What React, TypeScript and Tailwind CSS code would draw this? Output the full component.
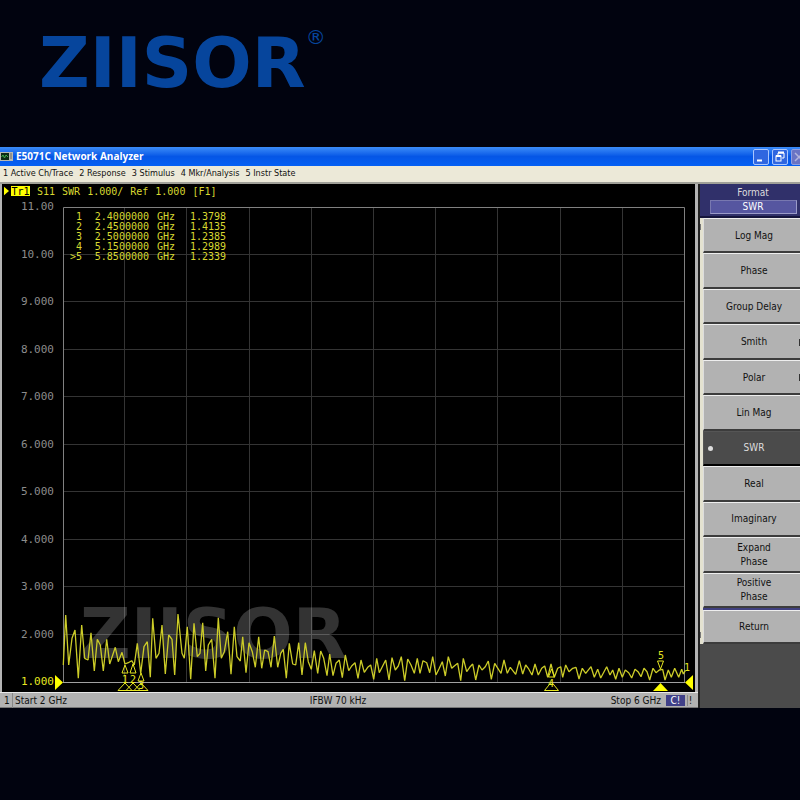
import React from "react";
import clsx from "clsx";

interface Marker {
  id: string;
  freq: string;
  value: string;
}

interface SoftKey {
  label: string;
  active?: boolean;
  submenu?: boolean;
}

const MENU = ["1 Active Ch/Trace", "2 Response", "3 Stimulus", "4 Mkr/Analysis", "5 Instr State"];

const MARKERS: Marker[] = [
  { id: "1", freq: "2.4000000", value: "1.3798" },
  { id: "2", freq: "2.4500000", value: "1.4135" },
  { id: "3", freq: "2.5000000", value: "1.2385" },
  { id: "4", freq: "5.1500000", value: "1.2989" },
  { id: ">5", freq: "5.8500000", value: "1.2339" },
];

const SCALE = ["11.00", "10.00", "9.000", "8.000", "7.000", "6.000", "5.000", "4.000", "3.000", "2.000", "1.000"];

const SOFT_KEYS: SoftKey[] = [
  { label: "Log Mag" },
  { label: "Phase" },
  { label: "Group Delay" },
  { label: "Smith", submenu: true },
  { label: "Polar", submenu: true },
  { label: "Lin Mag" },
  { label: "SWR", active: true },
  { label: "Real" },
  { label: "Imaginary" },
  { label: "Expand Phase" },
  { label: "Positive Phase" },
];

// Sweep samples in thirds of a plot unit, each run relative to its own start
const SWEEP: { start: number; points: number[][] }[] = [
  {
    start: 0,
    points: [
      [190, 225], [197, 75], [206, 225], [216, 145], [225, 120], [235, 265], [245, 105], [254, 205],
      [264, 210], [273, 128], [283, 243], [292, 148], [301, 165], [310, 243], [320, 148], [329, 222],
      [346, 172], [355, 215], [366, 187], [375, 222], [385, 218], [395, 212], [403, 225], [412, 160],
      [422, 250], [432, 170], [442, 155], [451, 262], [458, 85], [468, 205], [477, 190], [486, 105],
      [496, 252], [506, 135], [516, 148], [524, 255], [534, 72], [546, 190], [553, 205], [562, 110],
      [572, 268],
    ],
  },
  {
    start: 180,
    points: [
      [42, 100], [52, 200], [60, 190], [68, 98], [77, 243], [85, 165],
      [95, 148], [105, 265], [115, 83], [124, 205], [133, 185], [143, 125], [153, 253], [163, 110],
      [171, 200], [181, 213], [188, 140], [198, 248], [207, 158], [217, 185], [226, 232], [236, 140],
      [245, 235], [254, 180], [264, 185], [273, 232], [283, 138], [293, 232], [302, 190], [310, 178],
      [319, 265], [328, 160], [338, 222], [347, 225], [356, 158], [366, 255], [376, 158], [385, 215],
      [394, 238], [403, 182], [413, 250], [422, 183], [431, 205], [441, 257], [449, 192], [459, 257],
      [468, 220], [478, 210], [487, 263], [496, 195], [506, 242], [515, 228], [525, 218], [534, 265],
      [543, 210], [553, 247], [563, 232], [572, 225], [581, 268],
    ],
  },
  {
    start: 360,
    points: [
      [50, 205], [58, 248], [77, 210], [87, 270], [96, 203], [106, 240], [115, 228], [124, 200],
      [134, 272], [143, 207], [153, 225], [163, 250], [172, 205], [180, 250], [189, 212], [200, 218],
      [209, 248], [218, 200], [228, 255], [238, 235], [247, 215], [256, 258], [265, 200], [275, 235],
      [283, 228], [293, 220], [302, 272], [310, 205], [320, 245], [329, 232], [338, 222], [347, 270],
      [357, 225], [366, 240], [376, 230], [385, 213], [394, 268], [404, 220], [423, 250], [432, 210],
      [442, 250], [451, 232], [467, 253], [478, 212], [488, 252], [497, 225], [505, 235], [516, 255],
      [525, 222], [535, 255], [545, 235], [554, 228], [563, 262],
    ],
  },
  {
    start: 530,
    points: [
      [63, 222], [73, 262], [83, 235], [92, 230], [98, 262], [107, 225], [117, 245], [128, 235],
      [138, 232], [147, 267], [157, 235], [167, 250], [183, 230], [193, 262], [203, 238], [212, 264],
      [230, 230], [240, 255], [248, 240], [257, 268], [267, 235], [277, 262], [286, 240], [296, 248],
      [305, 264], [315, 238], [324, 245], [333, 260], [342, 235], [351, 245], [359, 270], [369, 235],
      [378, 248], [388, 240], [398, 238], [405, 270], [415, 240], [424, 262], [434, 235], [446, 262],
      [455, 238], [460, 252], [466, 242],
    ],
  },
];

const sweepPoints = SWEEP.flatMap(({ start, points }) =>
  points.map(([x, y]) => `${(start + x / 3).toFixed(1)},${(590 + y / 3).toFixed(1)}`),
).join(" ");

const WindowButton: React.FC<{ label: string; disabled?: boolean; children: React.ReactNode }> = ({
  label,
  disabled,
  children,
}) => (
  <button
    aria-label={label}
    className={clsx(
      "size-4 shrink-0 rounded-xs border",
      disabled ? "border-[#8f9fe0] bg-[#6a74c4] text-[#b3b5dc]" : "border-[#a9c6ff] bg-[#2f66e0] text-white",
    )}
  >
    <svg viewBox="0 0 14 14" className="size-full" fill="none" stroke="currentColor">
      {children}
    </svg>
  </button>
);

const TitleBar = () => (
  <div className="flex h-[19px] items-center overflow-hidden bg-linear-to-b from-[#3b8cf8] via-[#0556e6] to-[#0560f4]">
    <svg viewBox="0 0 13 9" className="mr-[3px] h-[9px] w-[13px] shrink-0">
      <rect width="13" height="9" fill="#b9b9b0" />
      <rect x="1" y="1" width="8" height="7" fill="#0c2a14" />
      <path d="M1.500 5 L3 3 L4.500 6 L6 3 L8 5" fill="none" stroke="#3fae4a" />
      <path d="M10 2h2M10 4h2M10 6h2" stroke="#555" strokeWidth=".8" />
    </svg>
    <h1 className="flex-1 font-['Open_Sans'] text-[10px] font-bold whitespace-nowrap text-white">
      E5071C Network Analyzer
    </h1>
    <div className="-mr-[7px] flex gap-[3px]">
      <WindowButton label="Minimize">
        <path d="M3 10.500h5" strokeWidth="2" />
      </WindowButton>
      <WindowButton label="Restore">
        <path d="M5 5V3h6v5H9" />
        <path d="M5 2.500h6" strokeWidth="2" />
        <rect x="3" y="6" width="5" height="5" />
        <path d="M3 6h5" strokeWidth="2" />
      </WindowButton>
      <WindowButton label="Close" disabled>
        <path d="M3 3l8 8M11 3l-8 8" strokeWidth="1.500" />
      </WindowButton>
    </div>
  </div>
);

const Plot = () => (
  <svg viewBox="54 200 641 492" className="block h-auto min-w-0 flex-1" role="img" aria-label="S11 SWR sweep">
    <g stroke="#343434" fill="none">
      {[1, 2, 3, 4, 5, 6, 7, 8, 9].map((i) => (
        <React.Fragment key={i}>
          <path d={`M${Math.round(63 + i * 62.2) - 0.5} 207V683`} />
          <path d={`M63 ${Math.round(207 + i * 47.5) - 0.5}H685`} />
        </React.Fragment>
      ))}
    </g>
    <path d="M63.500 683V207.500H684.500V683" fill="none" stroke="#808080" />
    <path d="M63 682.500H685" stroke="#a0a0a0" />
    <text
      x="80"
      y="658"
      fill="#fff"
      fillOpacity=".2"
      className="font-['DejaVu_Sans'] text-[70px] font-bold"
    >
      ZIISOR
    </text>
    <polyline points={sweepPoints} fill="none" stroke="#cccc28" strokeWidth="1.300" strokeLinejoin="bevel" />

    {/* markers sitting on the trace */}
    <g fill="none" stroke="#e6e620">
      <path d="M125 665l-3 8h6zM133 664l-3 9h6zM141 673l-3 8h6zM551.500 669l-3 8h6zM657.500 661h6l-3 8z" />
      <path d="M125 683l-7 7.500h14zM133 683l-7 7.500h14zM141 683l-7 7.500h14zM551.500 682l-7 8.500h14z" />
    </g>
    <g fill="#e6e620" className="font-['DejaVu_Sans_Mono'] text-[10px]">
      <text x="122" y="683">1</text>
      <text x="130" y="683">2</text>
      <text x="138" y="689">3</text>
      <text x="548" y="687">4</text>
      <text x="658" y="659">5</text>
      <text x="684" y="671">1</text>
    </g>
    <path d="M55 675l8 7.500-8 7.500zM693 675l-8 7.500 8 7.500zM653 691l7.500-8 7.500 8z" fill="#ff0" />
  </svg>
);

const TraceWindow = () => (
  <section className="flex min-w-0 flex-1 flex-col border-r-[3px] border-l-2 border-[#b4b4b4] bg-black">
    <div className="flex h-4 items-center gap-[7px] pb-[2px] font-['DejaVu_Sans_Mono'] text-[10px] text-[#d8d830]">
      <div className="flex items-center gap-[2px] pl-[2px]">
        <svg viewBox="0 0 6 10" className="h-[10px] w-[5px]">
          <path d="M0 0l6 5-6 5z" fill="#ff0" />
        </svg>
        <span className="flex h-[10px] w-[19px] items-center justify-center bg-[#ff0] text-black">Tr1</span>
      </div>
      <span>S11</span>
      <span>SWR</span>
      <span>1.000/</span>
      <span>Ref</span>
      <span>1.000</span>
      <span>[F1]</span>
    </div>
    <div className="relative flex flex-1">
      <ol className="flex w-[52px] shrink-0 flex-col justify-between pt-px pb-1 text-right font-['DejaVu_Sans_Mono'] text-[11px] leading-3">
        {SCALE.map((s, i) => (
          <li key={s} className={i === SCALE.length - 1 ? "text-[#e6e620]" : "text-[#8c8c8c]"}>
            {s}
          </li>
        ))}
      </ol>
      <Plot />
      <table className="absolute top-3 left-16 font-['DejaVu_Sans_Mono'] text-[10px] leading-[10px] text-[#d8d830]">
        <tbody>
          {MARKERS.map((m) => (
            <tr key={m.id}>
              <td className="w-4 p-0 text-right">{m.id}</td>
              <td className="w-[67px] p-0 text-right">{m.freq}</td>
              <td className="w-[26px] p-0 text-right">GHz</td>
              <td className="w-[51px] p-0 text-right">{m.value}</td>
            </tr>
          ))}
        </tbody>
      </table>
    </div>
  </section>
);

const SoftKeyButton: React.FC<SoftKey> = ({ label, active, submenu }) => (
  <button
    className={clsx(
      "relative flex items-center justify-center border-t border-b-2 border-l pt-px pl-1 text-[10px] leading-[14px]",
      active
        ? "border-t-[#555] border-b-black border-l-[#555] bg-[#4b4b4b] text-[#ddd]"
        : "border-t-[#eee] border-b-[#3c3c3c] border-l-[#ddd] bg-[#b2b2b2] text-[#111]",
    )}
  >
    {active && <span className="absolute left-1 size-[5px] rounded-full bg-[#ddd]" />}
    <span className={clsx(label.endsWith(" Phase") && "w-10")}>{label}</span>
    {submenu && <span className="absolute right-0 h-[7px] w-px bg-[#333]" />}
  </button>
);

const SoftKeyPanel = () => (
  <aside className="flex w-[102px] shrink-0 flex-col border-l-2 border-[#222] bg-[#4b4b4b]">
    <div className="flex h-[34px] flex-col items-center border-b-2 border-[#15153c] bg-[#30306a] pt-[2px] pl-[6px] text-[10px] leading-[14px] text-[#ddd]">
      <h2>Format</h2>
      <div className="h-[14px] w-[87px] border border-t-[#7878b0] border-r-[#9a9ac8] border-b-[#9a9ac8] border-l-[#7878b0] bg-[#5656a0] text-center leading-3 text-white">
        SWR
      </div>
    </div>
    <div className="flex">
      {/* sliver of the softkey scroll bar */}
      <div className="flex w-[3px] flex-col justify-between bg-[#e4e2d0] py-[6px]">
        <span className="h-[6px] w-px bg-[#777]" />
        <span className="h-[6px] w-px bg-[#777]" />
      </div>
      <div className="flex-1">
        <div className="grid h-[390px] grid-rows-11">
          {SOFT_KEYS.map((k) => (
            <SoftKeyButton key={k.label} {...k} />
          ))}
        </div>
        <div className="grid h-9 border-t-2 border-[#404080]">
          <SoftKeyButton label="Return" />
        </div>
      </div>
    </div>
  </aside>
);

const StatusBar = () => (
  <footer className="flex h-4 shrink-0 items-center border-t border-b border-t-[#e8e8e8] border-b-[#777] bg-[#b2b2b2] pr-[5px] text-[10px] text-[#111]">
    <span className="w-[13px] border-r border-[#888] pl-1">1</span>
    <span className="flex-1 pl-[2px]">Start 2 GHz</span>
    <span>IFBW 70 kHz</span>
    <span className="flex-1 pr-[5px] text-right">Stop 6 GHz</span>
    <span className="h-[11px] w-[19px] bg-[#404088] text-center leading-[11px] text-white">C!</span>
    <span className="ml-[2px] h-[11px] w-[6px] border-l border-[#888] text-center leading-[11px]">!</span>
  </footer>
);

export default function App() {
  return (
    <div className="min-h-screen overflow-hidden bg-[#01030f] font-['DejaVu_Sans_Condensed','Noto_Sans',sans-serif]">
      <header className="flex h-[147px] items-start pt-[26px] pl-[39px] font-['DejaVu_Sans'] text-[#06459c]">
        <span className="text-[70px] leading-[74px] font-bold">ZIISOR</span>
        <sup className="top-0 text-[20px] leading-[22px]">®</sup>
      </header>
      <main>
        <TitleBar />
        <nav className="flex h-[18px] items-center gap-[6px] border-b-2 border-[#a0a098] bg-[#ece9d8] pl-[3px] text-[9px] whitespace-nowrap text-[#111]">
          {MENU.map((item) => (
            <button key={item}>{item}</button>
          ))}
        </nav>
        <div className="flex">
          <div className="flex min-w-0 flex-1 flex-col">
            <TraceWindow />
            <StatusBar />
          </div>
          <SoftKeyPanel />
        </div>
      </main>
    </div>
  );
}
